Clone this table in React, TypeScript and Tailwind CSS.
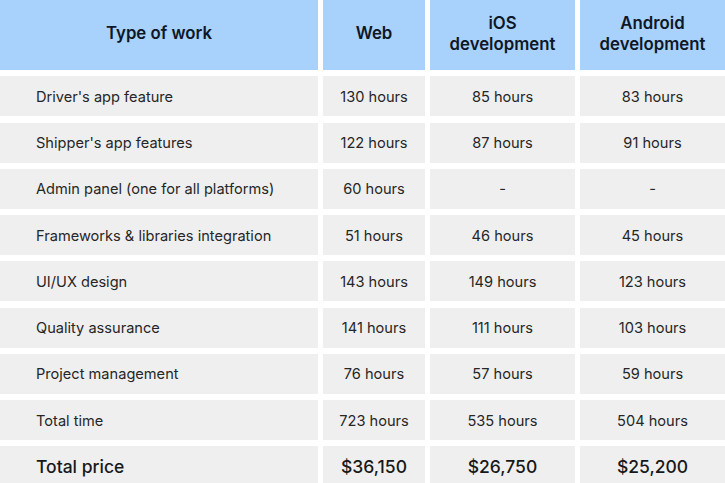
import React from "react";

const rows: [string, string, string, string][] = [
  ["Driver's app feature", "130 hours", "85 hours", "83 hours"],
  ["Shipper's app features", "122 hours", "87 hours", "91 hours"],
  ["Admin panel (one for all platforms)", "60 hours", "-", "-"],
  ["Frameworks & libraries integration", "51 hours", "46 hours", "45 hours"],
  ["UI/UX design", "143 hours", "149 hours", "123 hours"],
  ["Quality assurance", "141 hours", "111 hours", "103 hours"],
  ["Project management", "76 hours", "57 hours", "59 hours"],
  ["Total time", "723 hours", "535 hours", "504 hours"],
];

const head = "bg-[#a8d1fb] flex items-center justify-center text-center text-[16.8px] leading-[21px] font-semibold text-[#0e1726] pb-[3px]";
const cell = "bg-[#efefef] flex items-center justify-center text-[14.6px] text-[#262626] pt-[3px]";
const first = "bg-[#efefef] flex items-center pl-[36px] text-[14.6px] text-[#262626] pt-[3px]";
const total = "bg-[#efefef] flex items-center justify-center text-[17.5px] font-medium text-[#181818] pt-[2px]";

export default function App() {
  return (
    <div
      className="w-[725px] h-[483px] overflow-hidden bg-white"
      style={{ fontFamily: "Inter, 'Noto Sans', sans-serif" }}
    >
      <div className="grid grid-cols-[318px_102px_145px_145px] grid-rows-[70px_repeat(9,40px)] gap-x-[5px] gap-y-[6.25px]">
        <div className={head}>Type of work</div>
        <div className={head}>Web</div>
        <div className={head}>
          iOS
          <br />
          development
        </div>
        <div className={head}>
          Android
          <br />
          development
        </div>
        {rows.map((r, i) => (
          <React.Fragment key={i}>
            <div className={first}>{r[0]}</div>
            <div className={cell}>{r[1]}</div>
            <div className={cell}>{r[2]}</div>
            <div className={cell}>{r[3]}</div>
          </React.Fragment>
        ))}
        <div className="bg-[#efefef] flex items-center pl-[36px] text-[17.5px] font-medium text-[#181818] pt-[2px]">
          Total price
        </div>
        <div className={total}>$36,150</div>
        <div className={total}>$26,750</div>
        <div className={total}>$25,200</div>
      </div>
    </div>
  );
}
